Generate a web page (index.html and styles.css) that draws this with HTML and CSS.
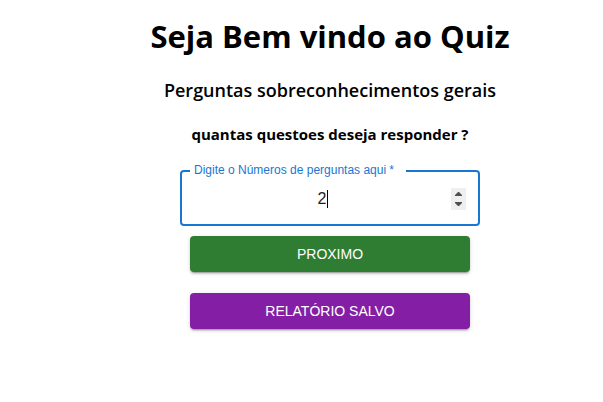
FILE: index.html
```html
<!DOCTYPE html>
<html lang="pt-BR">
<head>
<meta charset="utf-8">
<title>Quiz</title>
<link rel="stylesheet" href="styles.css">
</head>
<body>
<main class="quiz">
  <h1 class="title">Seja Bem vindo ao Quiz</h1>
  <h2 class="subtitle">Perguntas sobreconhecimentos gerais</h2>
  <h3 class="question">quantas questoes deseja responder ?</h3>
  <form class="form">
    <fieldset class="field">
      <legend class="legend"><label for="amount">Digite o Números de perguntas aqui<span class="required">*</span></label></legend>
      <div class="control">
        <input class="input" id="amount" type="number" value="2" required>
        <span class="caret"></span>
        <svg class="spinner" viewBox="0 0 15 22" aria-hidden="true"><path d="M4 8V7L7 4H8L11 7V8ZM4 14V15L7 18H8L11 15V14Z" fill="#505050"/></svg>
      </div>
    </fieldset>
    <button class="button next" type="button">PROXIMO</button>
    <button class="button report" type="button">RELATÓRIO SALVO</button>
  </form>
</main>
</body>
</html>
```
FILE: styles.css
```css
* { box-sizing: border-box; }

body {
  margin: 0;
  background: #fff;
  color: #000;
  font-family: "Open Sans", "Noto Sans", sans-serif;
}

.quiz {
  display: flex;
  flex-direction: column;
  align-items: center;
  padding: 14px 0 40px 57px;
}

.title, .subtitle, .question {
  margin: 0;
  font-weight: 700;
  text-align: center;
}

.title { font-size: 31px; line-height: 44px; }
.subtitle { margin-top: 20px; font-size: 18px; font-weight: 600; line-height: 24px; }
.question { margin-top: 20px; font-size: 15px; line-height: 24px; }

.form {
  display: flex;
  flex-direction: column;
  align-items: center;
  width: 100%;
  max-width: 300px;
  margin-top: 16px;
  font-family: "Liberation Sans", Arial, sans-serif;
}

.field {
  width: 100%;
  min-width: 0;
  margin: 0;
  padding: 0 12px 6px;
  border: 2px solid #1976d2;
  border-radius: 4px;
}

.legend {
  margin-left: -4px;
  padding: 0 9px 2px 4px;
  color: #1976d2;
  font-size: 12px;
  line-height: 16px;
}

.required { margin: 0 3px; }

.control {
  position: relative;
  display: flex;
  align-items: center;
  height: 38px;
}

.input {
  width: 100%;
  padding: 0 16px 0 0;
  border: 0;
  outline: 0;
  background: transparent;
  color: #212121;
  font: 16px/24px "Liberation Sans", Arial, sans-serif;
  text-align: center;
  appearance: textfield;
}

.input::-webkit-inner-spin-button { appearance: none; margin: 0; }

/* Text cursor after the digit */
.caret {
  position: absolute;
  left: calc(50% - 3px);
  width: 1px;
  height: 18px;
  background: #000;
}

/* Stepper arrows over the end of the field */
.spinner {
  position: absolute;
  right: 0;
  width: 15px;
  height: 22px;
  background: #efefef;
  pointer-events: none;
}

.button {
  width: calc(100% - 20px);
  padding: 6px 16px;
  border: 0;
  border-radius: 4px;
  color: #fff;
  font: 14px/24px "Liberation Sans", Arial, sans-serif;
  box-shadow: 0 3px 1px -2px rgba(0, 0, 0, .2), 0 2px 2px rgba(0, 0, 0, .14), 0 1px 5px rgba(0, 0, 0, .12);
}

.next { margin-top: 10px; background: #2e7d32; }
.report { margin-top: 21px; background: #841fa5; }
```
